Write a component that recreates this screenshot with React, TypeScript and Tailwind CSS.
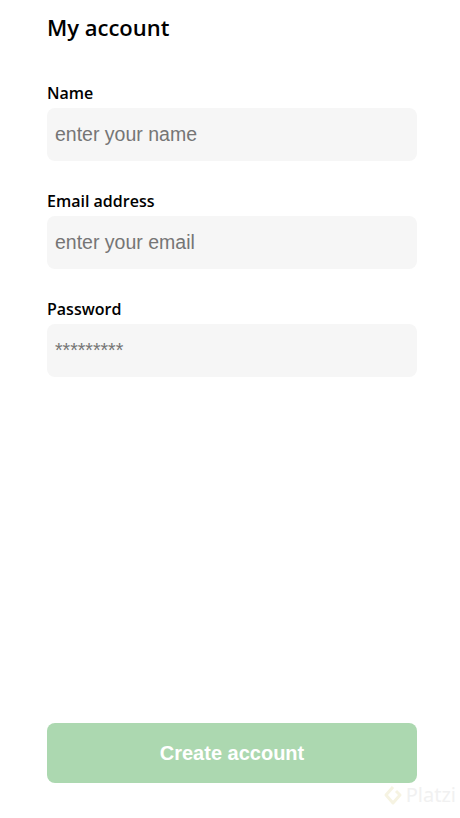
const fields = [
  { id: 'name', label: 'Name', placeholder: 'enter your name' },
  { id: 'email', label: 'Email address', placeholder: 'enter your email' },
  { id: 'password', label: 'Password', placeholder: '*********' },
];

export default function App() {
  return (
    <div className="relative h-[818px] w-full bg-white font-['Open_Sans',sans-serif]">
      <form className="ml-[47px] flex h-full w-[370px] flex-col pt-[12px] pb-[35px]">
        <h1 className="text-[22px] leading-[30px] font-semibold text-black">My account</h1>

        <div className="mt-[41px] flex flex-col gap-[30px]">
          {fields.map((field) => (
            <div key={field.id} className="flex flex-col">
              <label htmlFor={field.id} className="mb-[5px] text-[16px] leading-[20px] font-semibold text-black">
                {field.label}
              </label>
              <input
                id={field.id}
                type="text"
                placeholder={field.placeholder}
                className="h-[53px] w-full rounded-lg bg-[#f6f6f6] px-2 font-['Liberation_Sans',Arial,sans-serif] text-[19.5px] text-black outline-none placeholder:text-[#757575]"
              />
            </div>
          ))}
        </div>

        <button
          type="button"
          className="mt-auto h-[60px] w-full rounded-lg bg-[#acd8b0] font-['Liberation_Sans',Arial,sans-serif] text-[20px] font-bold text-white"
        >
          Create account
        </button>
      </form>

      <div className="absolute right-[4px] bottom-[8px] flex items-center gap-[3px] text-[20px] text-[#f1f1f1] font-['Noto_Sans',sans-serif]">
        <svg width="20" height="22" viewBox="0 0 20 22" fill="none" stroke="#f6f3e2" strokeWidth="3" strokeLinejoin="round">
          <path d="M10 3 L3 11 L10 19 L17 11 L13 7" />
        </svg>
        Platzi
      </div>
    </div>
  );
}
